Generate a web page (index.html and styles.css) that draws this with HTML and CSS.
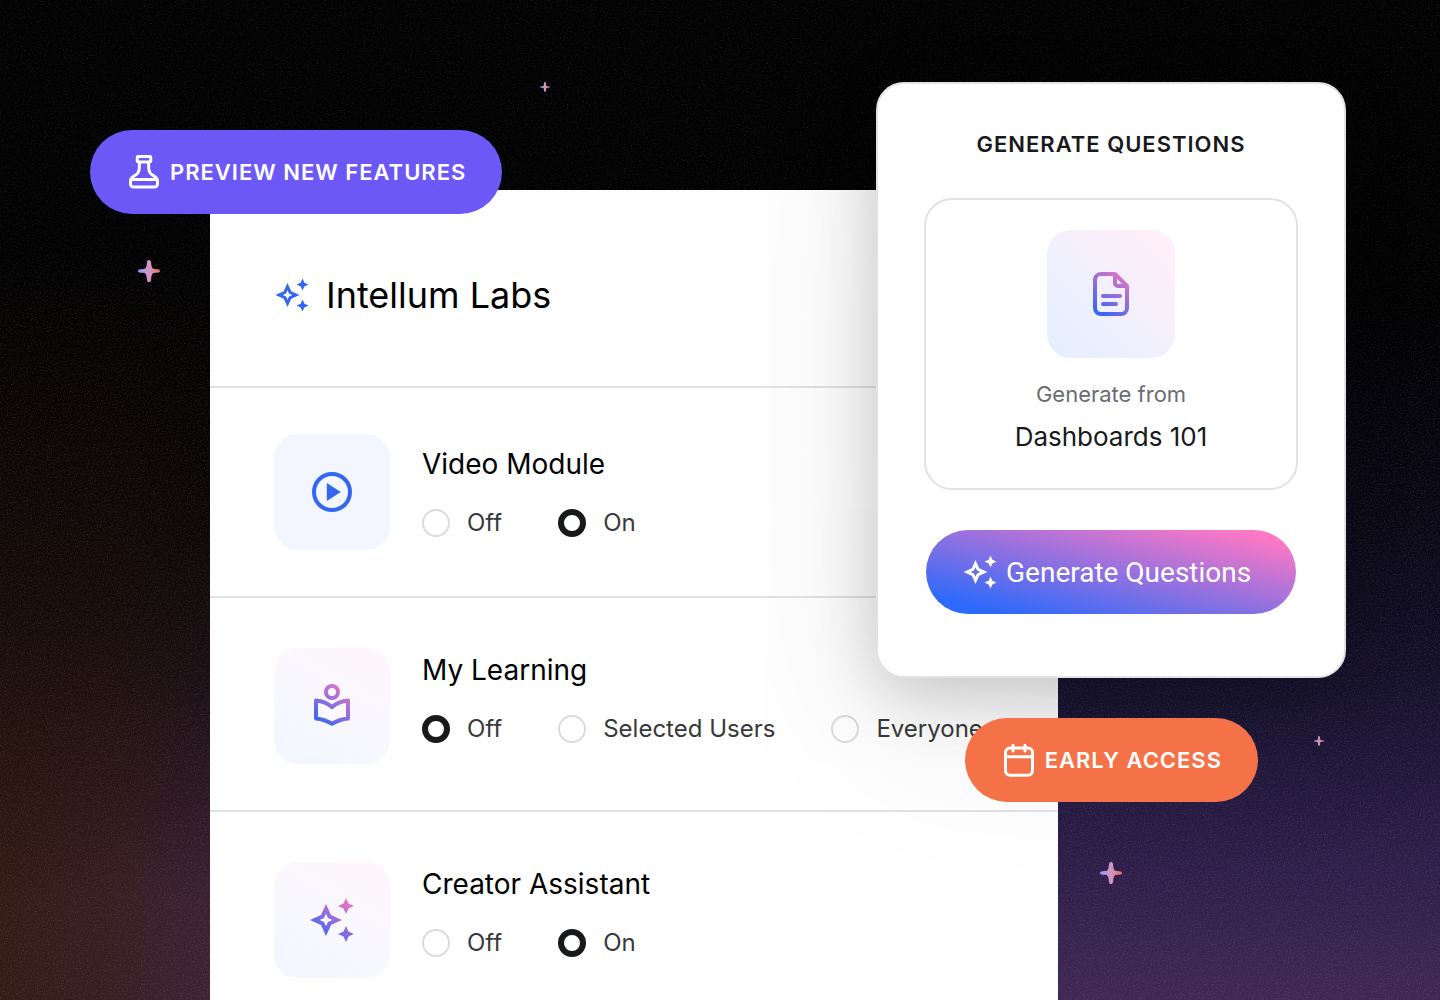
FILE: index.html
```html
<!DOCTYPE html>
<html lang="en">
<head>
<meta charset="UTF-8">
<meta name="viewport" content="width=device-width, initial-scale=1.0">
<title>Intellum Labs</title>
<link rel="stylesheet" href="styles.css">
</head>
<body>

<!-- shared icons and gradients -->
<svg class="defs" width="0" height="0" aria-hidden="true">
    <defs>
        <linearGradient id="pinkBlue" gradientUnits="userSpaceOnUse" x1="5" y1="22" x2="20" y2="2">
            <stop offset="0" stop-color="#2f66f5"/>
            <stop offset="1" stop-color="#ee76c4"/>
        </linearGradient>
        <linearGradient id="starFill" x1="0" y1="0" x2="1" y2="0">
            <stop offset="0" stop-color="#9a93f5"/>
            <stop offset="0.5" stop-color="#cf97c4"/>
            <stop offset="1" stop-color="#e87060"/>
        </linearGradient>
        <filter id="noise">
            <feTurbulence type="fractalNoise" baseFrequency="0.7" numOctaves="2"/>
            <feColorMatrix values="0 0 0 0 1  0 0 0 0 1  0 0 0 0 1  0.9 0 0 0 -0.4"/>
        </filter>
        <symbol id="sparkles" viewBox="0 0 24 24">
            <path d="M19 9l1.25-2.75L23 5l-2.75-1.25L19 1l-1.25 2.75L15 5l2.75 1.25L19 9zM19 15l-1.25 2.75L15 19l2.75 1.25L19 23l1.25-2.75L23 19l-2.75-1.25L19 15zM11.5 9.5L9 4 6.5 9.5 1 12l5.5 2.5L9 20l2.5-5.5L17 12l-5.5-2.5zm-1.51 3.49L9 15.17l-.99-2.18L5.83 12l2.18-.99L9 8.83l.99 2.18 2.18.99-2.18.99z"/>
        </symbol>
        <symbol id="star" viewBox="0 0 22 22">
            <path fill="url(#starFill)" d="M11 0c1.3 0 1.9 1 2.1 2.6.3 3.7.9 5.5 1.7 6 .6.4 2.2.4 4.6.6 1.7.2 2.6.8 2.6 1.8s-.9 1.6-2.6 1.8c-2.4.2-4 .2-4.6.6-.8.5-1.4 2.3-1.7 6C12.900 21 12.300 22 11 22s-1.900-1-2.100-2.600c-.3-3.700-.9-5.500-1.700-6-.6-.4-2.200-.4-4.600-.6C.9 12.600 0 12 0 11s.9-1.600 2.600-1.800c2.400-.2 4-.2 4.600-.6.8-.5 1.400-2.300 1.700-6C9.100 1 9.700 0 11 0z"/>
        </symbol>
    </defs>
</svg>

<svg class="grain" width="100%" height="100%" aria-hidden="true"><rect width="100%" height="100%" filter="url(#noise)"/></svg>

<svg class="star star-1" aria-hidden="true"><use href="#star"/></svg>
<svg class="star star-2 small" aria-hidden="true"><use href="#star"/></svg>
<svg class="star star-3 small" aria-hidden="true"><use href="#star"/></svg>
<svg class="star star-4" aria-hidden="true"><use href="#star"/></svg>

<main class="panel">
    <header class="panel-header">
        <svg class="icon" aria-hidden="true"><use href="#sparkles"/></svg>
        <h1>Intellum Labs</h1>
    </header>

    <section class="feature feature-first">
        <div class="tile tile-blue">
            <svg class="icon-large" viewBox="0 0 24 24" aria-hidden="true">
                <circle cx="12" cy="12" r="9" fill="none" stroke="#3367f0" stroke-width="2"/>
                <path d="M9.4 16.5l7-4.5-7-4.5z" fill="#3367f0"/>
            </svg>
        </div>
        <div class="feature-body">
            <h2 id="video">Video Module</h2>
            <div class="options" role="radiogroup" aria-labelledby="video">
                <label><input type="radio" name="video">Off</label>
                <label><input type="radio" name="video" checked>On</label>
            </div>
        </div>
    </section>

    <section class="feature">
        <div class="tile">
            <svg class="icon-large" viewBox="0 0 24 24" fill="none" stroke="url(#pinkBlue)" stroke-width="2" stroke-linejoin="round" aria-hidden="true">
                <circle cx="12" cy="5" r="3"/>
                <path d="M4 9.2C7 9.5 10 10.7 12 12.5C14 10.7 17 9.5 20 9.2V18.2C17 18.5 14.3 19.5 12 20.9C9.7 19.5 7 18.5 4 18.2Z"/>
            </svg>
        </div>
        <div class="feature-body">
            <h2 id="learning">My Learning</h2>
            <div class="options" role="radiogroup" aria-labelledby="learning">
                <label><input type="radio" name="learning" checked>Off</label>
                <label><input type="radio" name="learning">Selected Users</label>
                <label><input type="radio" name="learning">Everyone</label>
            </div>
        </div>
    </section>

    <section class="feature">
        <div class="tile">
            <svg class="icon-large" fill="url(#pinkBlue)" aria-hidden="true"><use href="#sparkles"/></svg>
        </div>
        <div class="feature-body">
            <h2 id="creator">Creator Assistant</h2>
            <div class="options" role="radiogroup" aria-labelledby="creator">
                <label><input type="radio" name="creator">Off</label>
                <label><input type="radio" name="creator" checked>On</label>
            </div>
        </div>
    </section>
</main>

<a class="pill pill-preview" href="#">
    <svg class="icon" viewBox="0 0 24 24" fill="none" stroke="#fff" stroke-width="2" stroke-linejoin="round" aria-hidden="true">
        <rect x="7.5" y="1.7" width="9" height="3.6" rx="0.6"/>
        <path d="M8.9 5.3V9.2C8.9 12.4 7.4 13.5 5 14.9C3.6 15.7 3 16.8 3 18.2V20A2 2 0 0 0 5 22H19A2 2 0 0 0 21 20V18.2C21 16.8 20.4 15.7 19 14.9C16.6 13.5 15.1 12.4 15.1 9.2V5.3M3.5 17H20.5"/>
    </svg>
    Preview new features
</a>

<aside class="card">
    <h2 class="card-title">Generate Questions</h2>
    <div class="source">
        <div class="tile tile-large">
            <svg class="icon-large" viewBox="0 0 24 24" fill="none" stroke="url(#pinkBlue)" stroke-width="2" stroke-linecap="round" stroke-linejoin="round" aria-hidden="true">
                <path d="M14 2H7A3 3 0 0 0 4 5V19A3 3 0 0 0 7 22H17A3 3 0 0 0 20 19V8L14 2V6.5A1.5 1.5 0 0 0 15.5 8H20"/>
                <path d="M8 13H16.5M8 17H14.5"/>
            </svg>
        </div>
        <p class="source-label">Generate from</p>
        <p class="source-name">Dashboards 101</p>
    </div>
    <button class="generate" type="button">
        <svg class="icon" fill="#fff" aria-hidden="true"><use href="#sparkles"/></svg>
        Generate Questions
    </button>
</aside>

<a class="pill pill-early" href="#">
    <svg class="icon" viewBox="0 0 24 24" fill="none" stroke="#fff" stroke-width="2" stroke-linecap="round" aria-hidden="true">
        <rect x="3" y="4" width="18" height="18.2" rx="3"/>
        <path d="M3 9.8H21M8 2.2V6M16 2.2V6"/>
    </svg>
    Early access
</a>

</body>
</html>
```

FILE: styles.css
```css
* {
    box-sizing: border-box;
}

body {
    position: relative;
    margin: 0;
    height: 100vh;
    overflow: hidden;
    font-family: Inter, "Liberation Sans", sans-serif;
    color: #18191b;
    background:
        radial-gradient(ellipse 260px 500px at 260px 100%, rgba(66, 36, 64, 0.7), transparent),
        linear-gradient(90deg, #341a14 0%, #341a14 8%, rgba(52, 26, 20, 0) 30%),
        linear-gradient(#000 30%, #0f0c1f 60%, #1a1433 72%, #2d1d49 86%, #3f2753 100%);
    background-color: #000;
}

/* darkens the glow towards the top */
body::before {
    content: "";
    position: absolute;
    inset: 0;
    background: linear-gradient(#000 25%, rgba(0, 0, 0, 0.6) 60%, transparent 90%);
    clip-path: inset(0 60% 0 0);
}

h1, h2, p {
    margin: 0;
    font-weight: 400;
}

.defs {
    position: absolute;
}

.grain {
    position: absolute;
    inset: 0;
    opacity: 0.25;
}

.icon {
    width: 36px;
    height: 36px;
    flex: none;
}

.icon-large {
    width: 48px;
    height: 48px;
}

.star {
    position: absolute;
    width: 22px;
    height: 22px;
}

.star.small {
    width: 10px;
    height: 10px;
}

.star-1 {
    left: 138px;
    top: 260px;
}

.star-2 {
    left: 540px;
    top: 82px;
}

.star-3 {
    right: 116px;
    top: 736px;
}

.star-4 {
    right: 318px;
    top: 862px;
}

.panel {
    position: relative;
    margin: 0 382px 0 210px;
    min-height: 100%;
    background: #fff;
    border-top: 190px solid transparent;
    background-clip: padding-box;
}

.panel-header {
    display: flex;
    align-items: center;
    gap: 16px;
    padding: 81px 64px 67px;
    border-bottom: 2px solid #e2e2e4;
    color: #000;
}

.panel-header .icon {
    fill: #3367f0;
}

.panel-header h1 {
    font-size: 36px;
    line-height: 48px;
}

.feature {
    display: flex;
    align-items: flex-start;
    gap: 32px;
    padding: 50px 64px 46px;
    border-bottom: 2px solid #e2e2e4;
}

.feature:last-child {
    border-bottom: none;
}

.feature-first {
    align-items: center;
    padding-top: 46px;
}

.tile {
    display: flex;
    align-items: center;
    justify-content: center;
    flex: none;
    width: 116px;
    height: 116px;
    border-radius: 24px;
    background: linear-gradient(30deg, #f2f6ff, #f9f8fe 50%, #fef6fc);
}

.tile-blue {
    background: #f3f6ff;
}

.tile-large {
    width: 128px;
    height: 128px;
    background: linear-gradient(to top right, #e4eeff, #f2f0fd 50%, #ffeff8 85%);
}

.feature-body h2 {
    font-size: 28px;
    line-height: 34px;
    margin-bottom: 28px;
    color: #000;
}

.feature:not(.feature-first) .feature-body {
    padding-top: 5px;
}

.options {
    display: flex;
    gap: 56px;
    font-size: 24px;
    line-height: 28px;
    color: #38393b;
}

.options label {
    display: flex;
    align-items: center;
    gap: 17px;
    white-space: nowrap;
}

.options input {
    appearance: none;
    width: 28px;
    height: 28px;
    margin: 0;
    flex: none;
    border: 2px solid #dcdcde;
    border-radius: 50%;
}

.options input:checked {
    border: 6px solid #18191b;
}

.pill {
    position: absolute;
    display: flex;
    align-items: center;
    gap: 8px;
    height: 84px;
    padding: 0 36px;
    border-radius: 42px;
    font-size: 22px;
    font-weight: 600;
    letter-spacing: 1px;
    text-transform: uppercase;
    text-decoration: none;
    white-space: nowrap;
    color: #fff;
}

.pill-preview {
    left: 90px;
    top: 130px;
    background: #6c57f7;
}

.pill-early {
    right: 182px;
    top: 718px;
    background: #f57248;
}

.card {
    position: absolute;
    top: 82px;
    right: 94px;
    width: 470px;
    padding: 46px 46px 62px;
    border: 2px solid #e2e2e4;
    border-radius: 28px;
    background: #fff;
    box-shadow: 0 40px 180px rgba(0, 0, 0, 0.1), 0 16px 64px rgba(0, 0, 0, 0.18);
}

.card-title {
    font-size: 22px;
    line-height: 28px;
    font-weight: 600;
    letter-spacing: 1px;
    text-align: center;
    text-transform: uppercase;
    margin-bottom: 40px;
}

.source {
    display: flex;
    flex-direction: column;
    align-items: center;
    padding: 30px 30px 33px;
    border: 2px solid #e2e2e4;
    border-radius: 28px;
}

.source-label {
    margin-top: 20px;
    font-size: 22px;
    line-height: 32px;
    color: #6b6c70;
}

.source-name {
    margin-top: 9px;
    font-size: 26px;
    line-height: 36px;
}

.generate {
    display: flex;
    align-items: center;
    gap: 8px;
    width: calc(100% - 4px);
    height: 84px;
    margin: 40px 2px 0;
    padding: 0 36px;
    border: none;
    border-radius: 42px;
    font-family: Roboto, sans-serif;
    font-size: 28px;
    white-space: nowrap;
    color: #fff;
    background: linear-gradient(to top right, #2b6afa 10%, #ff78c4 92%);
}
```
